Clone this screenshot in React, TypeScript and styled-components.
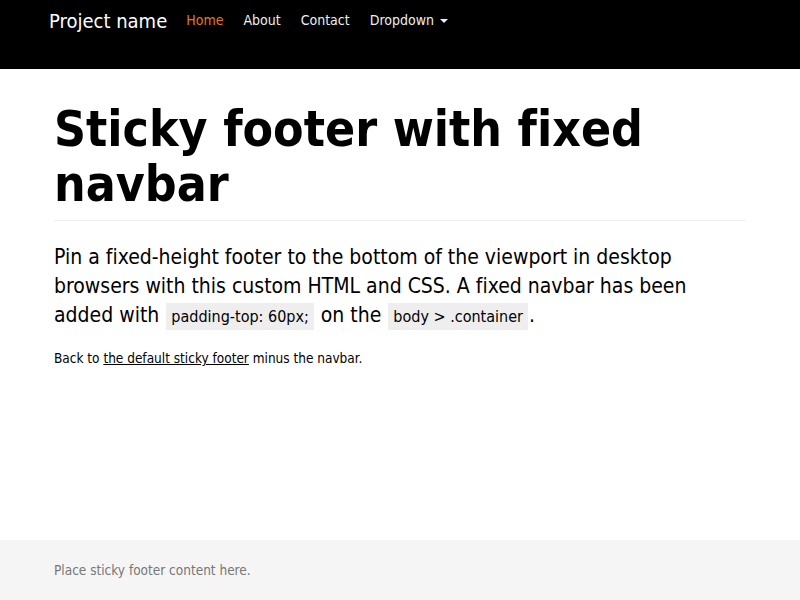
import React from 'react';
import styled, { createGlobalStyle } from 'styled-components';

const GlobalStyle = createGlobalStyle`
    html, body {
        margin: 0;
        padding: 0;
        height: 100%;
    }
    body {
        font-family: "DejaVu Sans Condensed", "DejaVu Sans", sans-serif;
        font-size: 14px;
        font-variant-ligatures: none;
        color: #000;
        background: #fff;
    }
    #root {
        min-height: 100%;
    }
`;

export const Page = styled.div`
    display: flex;
    flex-direction: column;
    min-height: 100vh;
`;

export const Navbar = styled.nav`
    background: #000;
    height: 69px;
    display: flex;
    align-items: flex-start;
    padding-left: 49px;
`;

export const Brand = styled.a`
    color: #fff;
    font-size: 20px;
    line-height: 20px;
    padding-top: 11px;
    margin-right: 9px;
    text-decoration: none;
`;

export const NavLinks = styled.ul`
    display: flex;
    list-style: none;
    margin: 0;
    padding: 0;
`;

export const NavItem = styled.li<{ $active?: boolean }>`
    a {
        display: block;
        padding: 12px 10px 13px;
        font-size: 14px;
        line-height: 16px;
        color: ${(p) => (p.$active ? '#e0782a' : '#eee')};
        text-decoration: none;
    }
`;

export const Caret = styled.span`
    display: inline-block;
    width: 0;
    height: 0;
    margin-left: 2px;
    vertical-align: middle;
    border-top: 4px solid #eee;
    border-left: 4px solid transparent;
    border-right: 4px solid transparent;
`;

export const Container = styled.main`
    flex: 1;
    padding: 0 54px;
`;

export const Header = styled.div`
    margin-top: 33px;
    padding-bottom: 8px;
    border-bottom: 1px solid #eee;
`;

export const Title = styled.h1`
    margin: 0;
    font-size: 49.5px;
    line-height: 55px;
    font-weight: bold;
`;

export const Lead = styled.p`
    margin: 22px 0 17px;
    font-size: 21px;
    line-height: 29px;
`;

export const Code = styled.code`
    font-family: "DejaVu Sans Condensed", "DejaVu Sans", sans-serif;
    font-size: 16px;
    background: #eee;
    padding: 4px 5px;
    margin: 0 1px;
`;

export const Text = styled.p`
    margin: 0;
    font-size: 13.5px;
    line-height: 20px;

    a {
        color: #000;
        text-decoration: underline;
    }
`;

export const Footer = styled.footer`
    background: #f5f5f5;
    height: 60px;
    display: flex;
    align-items: center;
    padding: 0 54px;
    color: #777;
    font-size: 13.5px;
`;

const App: React.FC = () => {
    return (
        <Page>
            <GlobalStyle />
            <Navbar>
                <Brand href="#">Project name</Brand>
                <NavLinks>
                    <NavItem $active><a href="#">Home</a></NavItem>
                    <NavItem><a href="#about">About</a></NavItem>
                    <NavItem><a href="#contact">Contact</a></NavItem>
                    <NavItem><a href="#">Dropdown <Caret /></a></NavItem>
                </NavLinks>
            </Navbar>
            <Container>
                <Header>
                    <Title>Sticky footer with fixed navbar</Title>
                </Header>
                <Lead>
                    Pin a fixed-height footer to the bottom of the viewport in desktop browsers with this custom HTML and CSS. A fixed navbar has been added with <Code>padding-top: 60px;</Code> on the <Code>body &gt; .container</Code>.
                </Lead>
                <Text>
                    Back to <a href="#">the default sticky footer</a> minus the navbar.
                </Text>
            </Container>
            <Footer>Place sticky footer content here.</Footer>
        </Page>
    );
};

export default App;
